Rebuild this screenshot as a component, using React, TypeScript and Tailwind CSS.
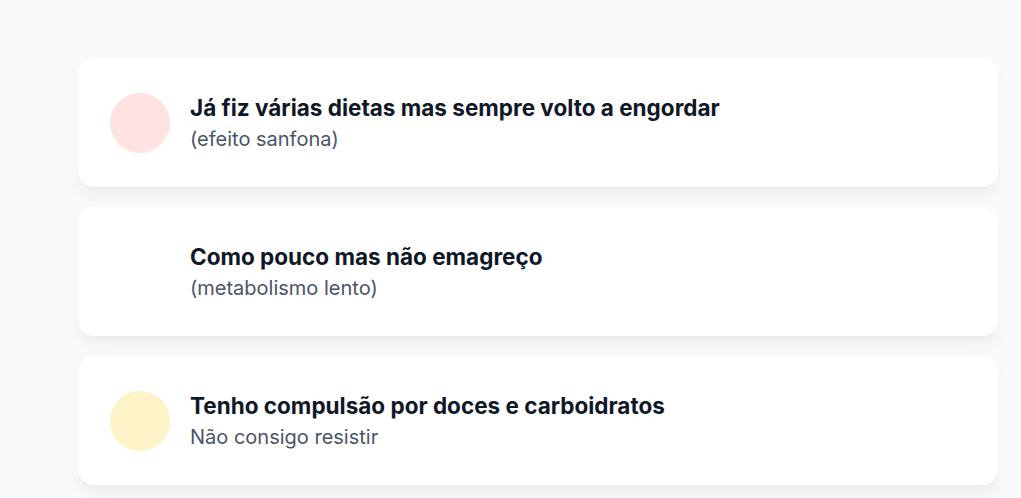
import React from 'react';

type Item = {
  title: string;
  subtitle: string;
  dot: string;
};

const items: Item[] = [
  { title: 'Já fiz várias dietas mas sempre volto a engordar', subtitle: '(efeito sanfona)', dot: 'bg-red-100' },
  { title: 'Como pouco mas não emagreço', subtitle: '(metabolismo lento)', dot: 'bg-white' },
  { title: 'Tenho compulsão por doces e carboidratos', subtitle: 'Não consigo resistir', dot: 'bg-amber-100' },
];

const App: React.FC = () => {
  return (
    <div
      className="min-h-[498px] w-full bg-gray-50 pl-[78px] pt-[58px]"
      style={{ fontFamily: 'Inter, "Noto Sans", sans-serif' }}
    >
      <div className="flex w-[920px] flex-col gap-5">
        {items.map(item => (
          <div
            key={item.title}
            className="flex items-center gap-5 rounded-2xl bg-white px-8 py-[33px] shadow-lg shadow-gray-200/70"
          >
            <div className={`h-[60px] w-[60px] shrink-0 rounded-full ${item.dot}`} />
            <div>
              <div className="text-[22.5px] font-bold leading-[34px] text-gray-900">{item.title}</div>
              <div className="text-xl leading-[29px] text-gray-600">{item.subtitle}</div>
            </div>
          </div>
        ))}
      </div>
    </div>
  );
};

export default App;
